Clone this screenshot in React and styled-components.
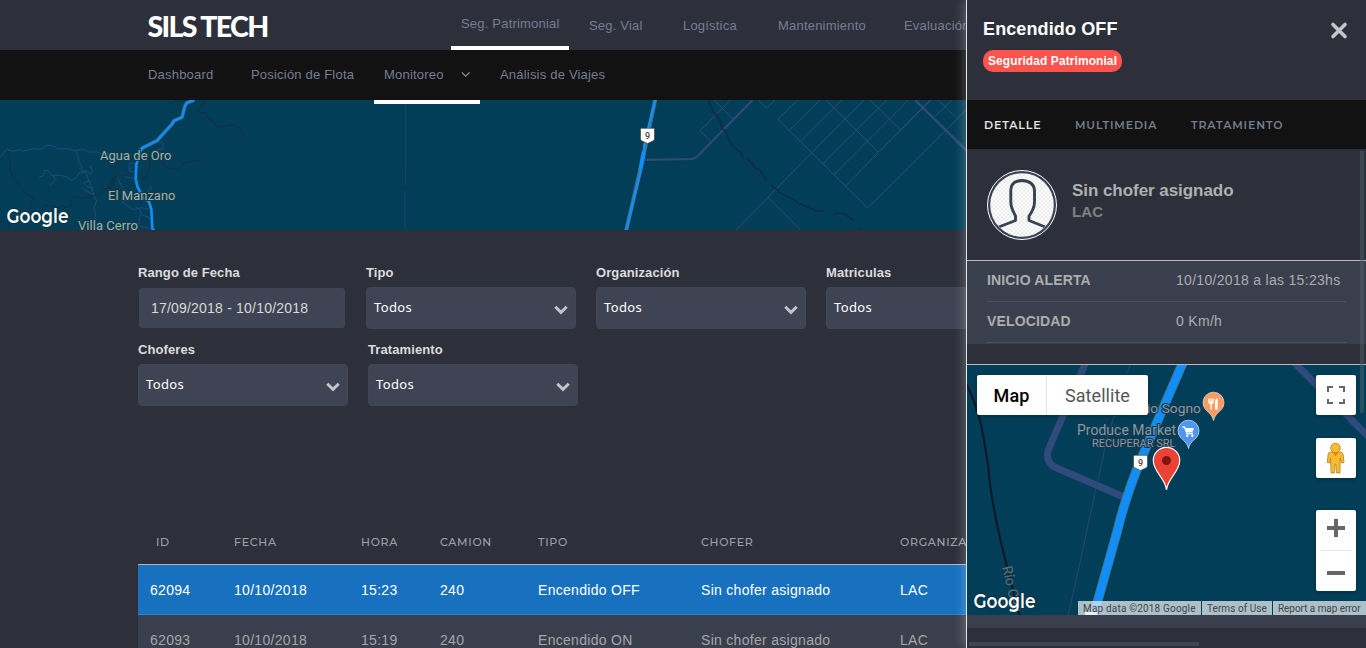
import React from 'react';
import styled, { createGlobalStyle } from 'styled-components';

const Global = createGlobalStyle`
  *{box-sizing:border-box}
  html,body{margin:0;height:648px;overflow:hidden;background:#2d303b}
  body{font-family:"Liberation Sans",Arial,sans-serif;font-size:14px;letter-spacing:.3px}
  svg{display:block}
`;

const Page = styled.div`position:relative;width:1366px;height:648px;overflow:hidden;background:#2d303b;`;

const TopBar = styled.header`display:flex;height:50px;padding-left:147px;background:#2d303b;`;
const Logo = styled.div`width:304px;height:50px;`;
const Nav = styled.nav`display:flex;`;
const NavItem = styled.a`
  flex:none;width:${p => p.$w}px;height:50px;padding-left:${p => (p.$active ? 10 : 20)}px;
  line-height:${p => (p.$active ? 47 : 51)}px;
  border-bottom:${p => (p.$active ? '4px solid #fff' : '0')};
  color:#747d92;font-size:13px;letter-spacing:.2px;white-space:nowrap;
`;

const SubBar = styled.nav`display:flex;height:50px;padding-left:138px;background:#121212;`;
const SubItem = styled.a`
  position:relative;z-index:1;display:flex;align-items:center;gap:17px;flex:none;
  width:${p => p.$w}px;height:${p => (p.$active ? 54 : 50)}px;
  padding:0 10px ${p => (p.$active ? 2 : 1)}px ${p => p.$indent || 10}px;
  border-bottom:${p => (p.$active ? '4px solid #fff' : '0')};
  color:#767e92;font-size:13px;letter-spacing:.2px;white-space:nowrap;
`;

const MapBand = styled.div`height:130px;background:#033e58;overflow:hidden;`;

const Filters = styled.section`
  display:flex;flex-direction:column;gap:14px;height:296px;padding:36px 0 0 138px;
`;
const FilterRow = styled.div`display:flex;gap:20px;height:63px;`;
const Field = styled.div`flex:none;width:${p => p.$w || 210}px;`;
const Label = styled.label`
  display:block;height:21px;line-height:14px;color:#dcdcdc;font-size:13px;font-weight:700;letter-spacing:.1px;
`;
const SelectBox = styled.div`
  display:flex;align-items:center;justify-content:space-between;width:210px;height:42px;padding:0 7px 2px;
  border-radius:4px;background:#3e4453;border:1px solid #414655;color:#fff;
  font-family:"Noto Sans","Open Sans",sans-serif;font-size:13px;letter-spacing:.35px;
  svg{margin-top:6px}
`;
const DateBox = styled.div`
  margin:1px 0 0 1px;width:206px;height:40px;padding-left:12px;line-height:40px;border-radius:3px;
  background:#3e4453;color:#d9d9d9;font-size:14px;letter-spacing:.2px;
`;

const TableRow = styled.div`
  display:grid;grid-template-columns:84px 127px 79px 98px 163px 199px 250px;align-items:center;
  margin-left:138px;padding-left:12px;height:${p => p.$h || 50}px;white-space:nowrap;
  color:${p => (p.$active ? '#fff' : '#a6a6a6')};
  background:${p => (p.$active ? '#1771bf' : '#3a3f4d')};
  border-bottom:1px solid ${p => (p.$active ? '#2a83cf' : '#484e5b')};
`;
const TableHead = styled(TableRow)`
  background:transparent;border-bottom:1px solid #b4b4b4;
  font-family:Montserrat,Inter,sans-serif;font-size:11px;letter-spacing:.7px;padding-bottom:6px;
  font-weight:500;color:#a0a1a5;
  span:first-child{padding-left:6px}
`;

const Panel = styled.aside`
  position:absolute;left:966px;top:0;width:400px;height:648px;background:#2d303b;
  border-left:1px solid #e6e6e6;box-shadow:0 0 12px rgba(255,255,255,.32);
`;
const PanelHead = styled.div`display:flex;justify-content:space-between;height:100px;padding:19px 18px 0 16px;`;
const Title = styled.h1`margin:0;line-height:20px;font-size:18px;font-weight:700;letter-spacing:.12px;color:#fff;`;
const Badge = styled.span`
  display:inline-block;margin-top:11px;height:22px;line-height:22px;padding:0 5px;border-radius:10px;
  background:#fc544c;color:#fff;font-size:12px;font-weight:700;letter-spacing:.08px;
`;
const Tabs = styled.div`
  display:grid;grid-template-columns:91px 116px 1fr;align-items:center;height:49px;padding-left:17px;
  background:#121212;font-family:Montserrat,Inter,sans-serif;font-size:11px;font-weight:600;letter-spacing:.85px;
`;
const Tab = styled.span`color:${p => (p.$active ? '#e4e4e4' : '#757d90')};padding-top:1px;`;
const Driver = styled.div`display:flex;gap:15px;height:112px;padding:21px 0 0 20px;border-bottom:1px solid #b9bbbf;`;
const DriverText = styled.div`padding-top:10px;font-weight:700;`;
const DriverName = styled.div`line-height:21px;font-size:17px;letter-spacing:-.05px;color:#b0b0b0;`;
const DriverOrg = styled.div`line-height:22px;font-size:15px;letter-spacing:.1px;color:#818181;`;
const Facts = styled.div`height:83px;padding:0 20px;background:#3a3f4d;`;
const Fact = styled.div`
  display:grid;grid-template-columns:189px 1fr;height:41px;line-height:39px;border-bottom:1px solid #4a505e;color:#adadad;white-space:nowrap;
  b{letter-spacing:.15px}
`;
const PanelMap = styled.div`
  position:relative;margin-top:20px;height:251px;border-top:1px solid #b9bbbf;background:#033e58;overflow:hidden;
`;
const Strip = styled.div`height:13px;background:#3a3f4d;`;
const MapType = styled.div`
  position:absolute;left:10px;top:10px;display:flex;width:171px;height:40px;border-radius:2px;background:#fff;
  box-shadow:0 1px 4px rgba(0,0,0,.3);font-family:Roboto,sans-serif;font-size:18px;line-height:41px;text-align:center;
`;
const TypeButton = styled.span`
  width:${p => p.$w}px;color:${p => (p.$active ? '#000' : '#565656')};font-weight:${p => (p.$active ? 500 : 400)};
  letter-spacing:${p => (p.$active ? 0.15 : 0.05)}px;
  border-right:${p => (p.$active ? '1px solid #e4e4e4' : '0')};
`;
const Control = styled.div`
  position:absolute;right:10px;top:${p => p.$top}px;width:40px;height:${p => p.$h || 40}px;border-radius:2px;
  background:#fff;box-shadow:0 1px 4px rgba(0,0,0,.3);
`;
const Credits = styled.div`
  position:absolute;right:0;bottom:0;display:flex;gap:1px;height:14px;line-height:15px;color:#444;
  font-family:Roboto,sans-serif;font-size:10px;white-space:nowrap;
`;
const Credit = styled.span`width:${p => p.$w}px;padding-left:5px;background:rgba(226,232,236,.76);letter-spacing:${p => p.$ls}px;`;
const VScroll = styled.div`position:absolute;right:2px;top:151px;width:4px;height:262px;background:rgba(79,96,107,.5);`;
const HScroll = styled.div`position:absolute;left:2px;top:642px;width:230px;height:4px;background:#3d4652;`;

const Chevron = () => (
  <svg width="14" height="10" viewBox="0 0 14 10"><path d="M1.3 1.8 7 7.4l5.7-5.6" fill="none" stroke="#c3c4c8" strokeWidth="3" /></svg>
);

const GoogleMark = ({ x, y }) => (
  <text x={x} y={y} textLength="62" lengthAdjust="spacingAndGlyphs" fontFamily="Montserrat, Lato, sans-serif" fontWeight="600" fontSize="19.500"
    fill="#fff" letterSpacing="0" style={{ textShadow: '0 0 2px rgba(0,0,0,.55)' }}>Google</text>
);

const RouteShield = ({ x, y }) => (
  <g transform={`translate(${x} ${y})`}>
    <path d="M-7-6q0-1.200 1.200-1.200H5.800Q7-7.200 7-6V3.500Q7 4.800 5.500 5.400L0 8l-5.500-2.600Q-7 4.800-7 3.500Z" fill="#fff" stroke="#444" strokeWidth=".7" />
    <text y="3.300" textAnchor="middle" fontSize="9" fontFamily="Roboto, sans-serif" fontWeight="500" fill="#444" letterSpacing="0">9</text>
  </g>
);

const Place = ({ x, y, w, size = 12.8, fill = '#8fb9b3', children }) => (
  <text x={x} y={y} textLength={w} lengthAdjust="spacingAndGlyphs" fontSize={size} fontFamily="Roboto, sans-serif" fill={fill} stroke="#1a3646" strokeWidth="2.200"
    strokeLinejoin="round" paintOrder="stroke" letterSpacing="0">{children}</text>
);

const FleetMap = () => (
  <svg width="1366" height="130" viewBox="0 100 1366 130" fill="none">
    <g transform="translate(0 98) scale(.33333)" strokeLinejoin="round">
      <g stroke="#1f4b7c" strokeWidth="3">
        <path d="M0 177l20-22 18 5 20-5 10 5 30-8 25 2 18-13 22 4 12 8 28-1 18 6 30-4 12 8 30 0 10 6 30-3 14 4M225 155l8 15 3 18 8 15 2 16 13 4 5 20 8 18 7 20 3 12 8 15-8 20 4 17-3 25-10 12 2 15" />
        <path d="M118 237l13-4 2-16 12 1 10 14h28l18 5 14 10 14-8 8-14 17-2M155 232l10 8-2 12-13 8M246 220l15-1 10 10 7-10-7-14M278 270l-17-4-9-10 8-6h14M285 290l-14-4-22-15M345 232l20-5 12 10 25 5M450 262l4 10-15 10-10 10h-12l-8 10-22-5-8-12-15-20-10-25M430 280l-15-15" />
        <path d="M390 195l-5 14 8 13 14-2 6-13-14-13zM398 205l-10 15M470 128l18 6 2 18-20 5M365 315l22-15 18-5M370 315l30 20 25-6 20 5M405 325l15 10 5 15 18 7 13 8M418 385l25 5 20 5M420 350l-4 30" />
        <path d="M1217 0V200l-1 10v50M1216 280h-1V400" strokeWidth="2" />
      </g>
      <g stroke="#172d40" strokeWidth="3">
        <path d="M20 155l9 15 1 48 14 26 20 22 10 20 15 7 16 5-11 10-3 16 5 10M125 332l10-10 25 2 10 6 15-6 18 5 14-10-4-14 16-12 12 8 50-10 15-8 10-10 18-2 13-40 15-3 15 6M620 6l-28 30 6 8 18-1 11 22 10 1 14 22 15-3 14-1 18-5 8 6 13 5 11 20M550 10l-20-3-20 10-5-8M452 188l-7 35-12 18-20-1M475 182l12 13 14 16 32 3 20-18 30-7 20-4M0 370l20 2 10 20M345 232l-20 35 20 15 20-10" />
      </g>
      <path d="M583 6l-23 9-6 12-8 31-24 10-7 12-19 20-25 28-44 22-6 8" stroke="#365966" strokeWidth="12" />
      <path d="M583 6l-23 9-6 12-8 31-24 10-7 12-19 20-25 28-44 22-6 8-12 42-2 43 6 25 17 32 17 11 7 23 3 57 6 9" stroke="#118ef5" strokeWidth="8" />
    </g>
    <g transform="translate(400 98) scale(.33333)">
      <path d="M766 4L731 170 678 400" stroke="#466a70" strokeWidth="12" />
      <path d="M766 4L740 115M734 135l-3 45L678 400" stroke="#118ef5" strokeWidth="8" />
      <path d="M731 160l-10 55" stroke="#118ef5" strokeWidth="11" />
      <path d="M733 186l143-3 13-5L1058 6" stroke="#304a7c" strokeWidth="6" />
    </g>
    <g transform="translate(660 98) scale(.33333)" stroke="#304a7c" strokeWidth="3">
      <path d="M212 6l-92 92 32 32M162 6l58 58M295 6l25 24L345 6M412 6l-58 58 269 266L920 34M388 97l92-91M421 130L545 6M455 164L613 6M489 197L680 6M522 230L745 6M556 265L810 6M455 164L228 396M324 298l98 98M498 6l158 158M630 6l92 90 92-90M835 6l55 54M825 56l50-50" />
      <path d="M765 6l155 152" strokeWidth="7" />
      <path d="M142 6l12 20 6 16 19 21 6 26 15 16 11 32 14 14 18 13 7 18M259 180l16 15 12 17 12 3 21 32M334 262l28 23 37 19 18 13 34 14 24 8h15M523 346h27l15 10 16 12M598 392v4" stroke="#112b3a" strokeWidth="4" />
    </g>
    <Place x="100" y="159.500" w="71.500">Agua de Oro</Place>
    <Place x="108" y="199.500" w="67.500">El Manzano</Place>
    <Place x="78" y="229.500" w="60">Villa Cerro</Place>
    <RouteShield x="647.500" y="135.500" />
    <GoogleMark x="6.500" y="222.500" />
  </svg>
);

const Pin = ({ x, y, fill, children }) => (
  <g transform={`translate(${x} ${y})`}>
    <path d="M0 17C-1.500 11-5 9-8 6A10.500 10.500 0 1 1 8 6C5 9 1.500 11 0 17Z" fill={fill} stroke="#d3d9dd" strokeWidth=".8" />
    {children}
  </g>
);

const AlertMap = () => (
  <svg width="399" height="250" viewBox="967 365 399 250" fill="none">
    <g transform="translate(960 240) scale(.33333)">
      <path d="M378 365L265 630Q255 665 285 682L490 770M985 350L1250 615" stroke="#304a7c" strokeWidth="21" />
      <path d="M515 360L440 600 322 1140" stroke="#2a4472" strokeWidth="3" />
      <path d="M15 425C70 530 70 600 85 680 90 760 110 860 141 980L180 1130" stroke="#101725" strokeWidth="6" />
      <path d="M670 365L555 630Q500 755 470 880L400 1130" stroke="#46707a" strokeWidth="29" />
      <path d="M670 365L555 630Q500 755 470 880L400 1130" stroke="#118ef9" strokeWidth="24" />
    </g>
    <Place x="1147" y="413" w="54" size={13.5} fill="#8298ad">io Sogno</Place>
    <Place x="1077" y="435" w="99" size={14} fill="#7c9eaf">Produce Market</Place>
    <Place x="1092" y="447" w="83.500" size={11} fill="#8298ad">RECUPERAR SRL</Place>
    <text transform="translate(1002 567) rotate(77)" fontFamily="Roboto, sans-serif" fontSize="14" fill="#567078" stroke="#1a3646" strokeWidth="1" paintOrder="stroke" letterSpacing="0">Río Cev</text>
    <Pin x={1213.500} y={403.500} fill="#fc9a61">
      <path d="M-4.500-5v3.500q0 1.500 2 1.500T-.5-1.500V-5M-2.500-5V6" stroke="#fff" strokeWidth="1.400" />
      <path d="M1.500 6V-2q0-3 2.700-3.500V6" fill="#fff" />
    </Pin>
    <Pin x={1188.500} y={431.500} fill="#4d96f5">
      <path d="M-6-4.500h2L-1.500 2h6" stroke="#fff" strokeWidth="1.300" />
      <path d="M-3.800-3.500H5.500L3.800.8H-2.200Z" fill="#fff" /><circle cx="-1.200" cy="4.200" r="1.200" fill="#fff" /><circle cx="3.800" cy="4.200" r="1.200" fill="#fff" />
    </Pin>
    <RouteShield x="1140.500" y="462.500" />
    <path d="M1166.500 490C1165.500 478 1153.300 472 1153.300 460.500a13.200 13.200 0 0 1 26.400 0C1179.700 472 1167.500 478 1166.500 490Z" fill="#ea4335" stroke="#fff" strokeWidth="1.200" />
    <circle cx="1166.500" cy="460.500" r="4.500" fill="#811411" />
    <rect x="1085" y="612" width="12" height="3" fill="#fff" />
    <GoogleMark x="973.500" y="607.500" />
  </svg>
);

const Avatar = () => (
  <svg width="70" height="70" viewBox="0 0 70 70">
    <defs>
      <pattern id="check" width="4" height="4" patternUnits="userSpaceOnUse">
        <path d="M0 0h4v4H0z" fill="#fff" /><path d="M0 0h2v2H0zM2 2h2v2H2z" fill="#ececec" />
      </pattern>
      <clipPath id="face"><circle cx="35" cy="35" r="31.500" /></clipPath>
    </defs>
    <circle cx="35" cy="35" r="34.500" fill="#374252" stroke="#fff" />
    <circle cx="35" cy="35" r="31.800" fill="url(#check)" />
    <path clipPath="url(#face)" d="M9 59L13 56.500 28.500 50.500V46C26 41 23.800 38 23.800 32V20Q24 11 35 10.500 46.500 11 47.500 20V32C47.500 38 45 42 42 46V50.500L57 56.500 61 59" fill="none" stroke="#374252" strokeWidth="2.900" strokeLinejoin="round" />
  </svg>
);

const Pegman = () => (
  <svg width="40" height="40" viewBox="0 0 40 40">
    <g fill="#fbbc2c" stroke="#a9832d" strokeWidth=".8" strokeLinejoin="round">
      <path d="M14.500 14h10q2 0 2.500 2l1 8.500-2.500.5-1.300-5-.2 15h-3.500l-.6-9h-.8l-.6 9H15l-.4-15-1 5-2.400-.5L12.200 16q.3-2 2.300-2Z" />
      <circle cx="19.500" cy="10" r="4.800" />
    </g>
    <path d="M16.500 14.500h6l-3 4Z" fill="#e87d2c" />
  </svg>
);

const columns = ['ID', 'FECHA', 'HORA', 'CAMION', 'TIPO', 'CHOFER', 'ORGANIZACIÓN'];
const alerts = [
  ['62094', '10/10/2018', '15:23', '240', 'Encendido OFF', 'Sin chofer asignado', 'LAC'],
  ['62093', '10/10/2018', '15:19', '240', 'Encendido ON', 'Sin chofer asignado', 'LAC'],
];

const SelectField = ({ label }) => (
  <Field><Label>{label}</Label><SelectBox>Todos<Chevron /></SelectBox></Field>
);

export default function App() {
  return (
    <>
      <Global />
      <Page>
        <TopBar>
          <Logo>
            <svg width="130" height="50">
              <text x="0.500" y="37.300" textLength="122" lengthAdjust="spacing" fontFamily="Lato, sans-serif" fontWeight="900" fontSize="28.500" fill="#fff">SILS TECH</text>
            </svg>
          </Logo>
          <Nav>
            <NavItem $active $w={118}>Seg. Patrimonial</NavItem>
            <NavItem $w={94}>Seg. Vial</NavItem>
            <NavItem $w={95}>Logística</NavItem>
            <NavItem $w={126}>Mantenimiento</NavItem>
            <NavItem $w={120}>Evaluación</NavItem>
          </Nav>
        </TopBar>
        <SubBar>
          <SubItem $w={103}>Dashboard</SubItem>
          <SubItem $w={133}>Posición de Flota</SubItem>
          <SubItem $w={106} $active>
            Monitoreo
            <svg width="11" height="7" viewBox="0 0 11 7"><path d="M1 1l4.500 4.500L10 1" fill="none" stroke="#8990a0" strokeWidth="1.500" /></svg>
          </SubItem>
          <SubItem $w={140} $indent={20}>Análisis de Viajes</SubItem>
        </SubBar>
        <MapBand><FleetMap /></MapBand>
        <Filters>
          <FilterRow>
            <Field $w={208}><Label>Rango de Fecha</Label><DateBox>17/09/2018 - 10/10/2018</DateBox></Field>
            <SelectField label="Tipo" />
            <SelectField label="Organización" />
            <SelectField label="Matriculas" />
          </FilterRow>
          <FilterRow>
            <SelectField label="Choferes" />
            <SelectField label="Tratamiento" />
          </FilterRow>
        </Filters>
        <TableHead $h={39}>{columns.map(c => <span key={c}>{c}</span>)}</TableHead>
        {alerts.map((row, i) => (
          <TableRow key={row[0]} $active={i === 0}>{row.map((cell, j) => <span key={j}>{cell}</span>)}</TableRow>
        ))}
        <Panel>
          <PanelHead>
            <div><Title>Encendido OFF</Title><Badge>Seguridad Patrimonial</Badge></div>
            <svg width="18" height="23" viewBox="0 0 18 23"><path d="M3 5.500l12 12M15 5.500l-12 12" stroke="#c4c5c8" strokeWidth="3.600" strokeLinecap="round" /></svg>
          </PanelHead>
          <Tabs><Tab $active>DETALLE</Tab><Tab>MULTIMEDIA</Tab><Tab>TRATAMIENTO</Tab></Tabs>
          <Driver>
            <Avatar />
            <DriverText><DriverName>Sin chofer asignado</DriverName><DriverOrg>LAC</DriverOrg></DriverText>
          </Driver>
          <Facts>
            <Fact><b>INICIO ALERTA</b><span>10/10/2018 a las 15:23hs</span></Fact>
            <Fact><b>VELOCIDAD</b><span>0 Km/h</span></Fact>
          </Facts>
          <PanelMap>
            <AlertMap />
            <MapType><TypeButton $active $w={70}>Map</TypeButton><TypeButton $w={101}>Satellite</TypeButton></MapType>
            <Control $top={10}>
              <svg width="40" height="40"><path d="M12 17v-5h5M23 12h5v5M28 24v4h-5M17 28h-5v-4" fill="none" stroke="#666" strokeWidth="2" /></svg>
            </Control>
            <Control $top={73}><Pegman /></Control>
            <Control $top={145} $h={81}>
              <svg width="40" height="81"><path d="M11 18h18M20 9v18M11 63h18" stroke="#666" strokeWidth="4" /><path d="M5 40.500h30" stroke="#e6e6e6" /></svg>
            </Control>
            <Credits>
              <Credit $w={123} $ls={0.18}>Map data ©2018 Google</Credit>
              <Credit $w={70} $ls={0.05}>Terms of Use</Credit>
              <Credit $w={93} $ls={-0.05}>Report a map error</Credit>
            </Credits>
          </PanelMap>
          <Strip />
          <VScroll />
          <HScroll />
        </Panel>
      </Page>
    </>
  );
}
